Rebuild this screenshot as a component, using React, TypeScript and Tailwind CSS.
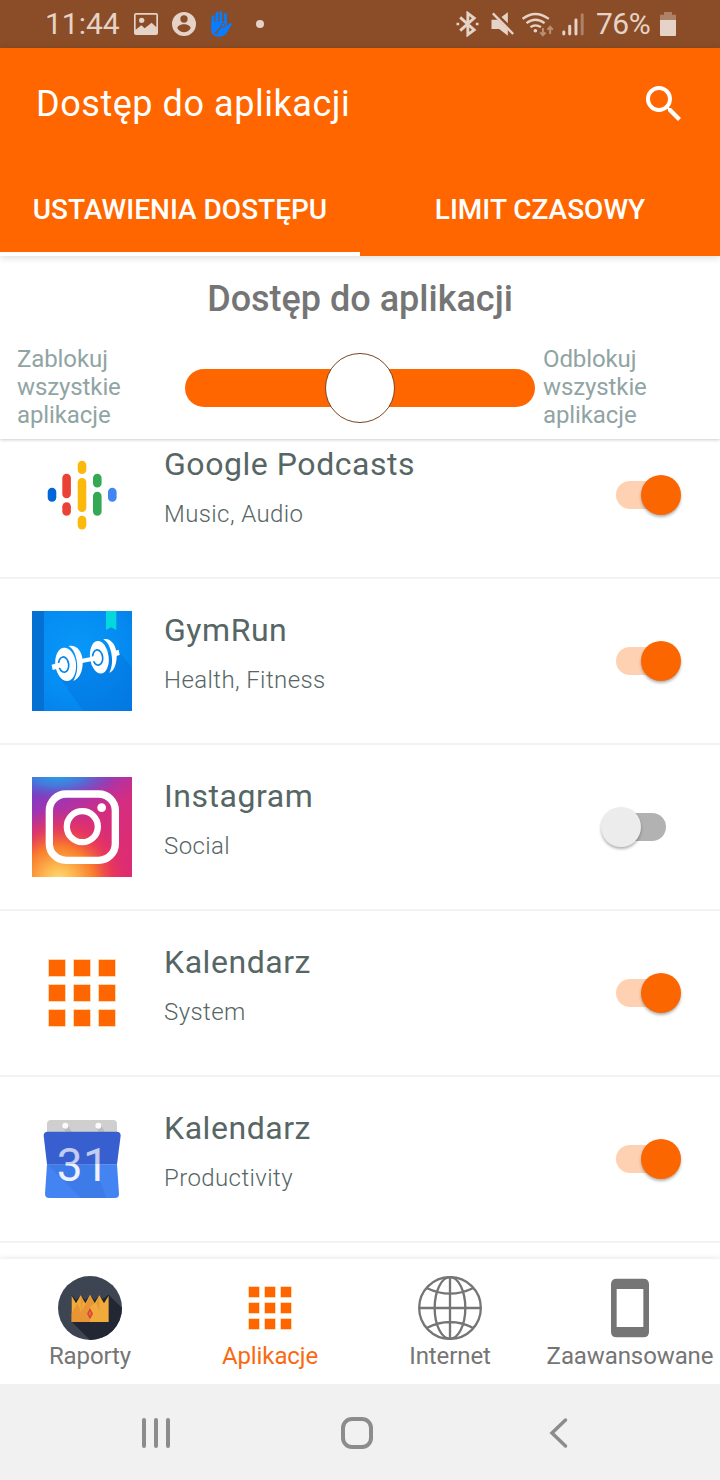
import { useState } from 'react';
import type { ReactNode } from 'react';
import { MdSearch } from 'react-icons/md';

interface AppEntry {
  id: string;
  name: string;
  category: string;
  icon: ReactNode;
  allowed: boolean;
}

function PodcastsIcon() {
  return (
    <svg viewBox="0 0 100 100" className="size-[100px]">
      <rect x="15.7" y="42.7" width="8.6" height="14" rx="4.3" fill="#0066d9" />
      <rect x="30.3" y="28.7" width="8.6" height="24.5" rx="4.3" fill="#ea4335" />
      <rect x="30.3" y="57.2" width="8.6" height="13.6" rx="4.3" fill="#ea4335" />
      <rect x="45.7" y="15.7" width="8.6" height="13.3" rx="4.3" fill="#fbb90b" />
      <rect x="45.7" y="33" width="8.6" height="34" rx="4.3" fill="#fbb90b" />
      <rect x="45.7" y="70.8" width="8.6" height="13.6" rx="4.3" fill="#fbb90b" />
      <rect x="61" y="28.7" width="8.6" height="13.8" rx="4.3" fill="#34a853" />
      <rect x="61" y="46.8" width="8.6" height="24" rx="4.3" fill="#34a853" />
      <rect x="76" y="42.7" width="8.6" height="14" rx="4.3" fill="#4285f4" />
    </svg>
  );
}

function GymRunIcon() {
  return (
    <svg viewBox="96 33 300 300" className="size-[100px]">
      <defs>
        <radialGradient id="gym-bg" cx="0.45" cy="0.4" r="0.75">
          <stop offset="0" stopColor="#0798f8" />
          <stop offset="0.6" stopColor="#058cf2" />
          <stop offset="1" stopColor="#0480e8" />
        </radialGradient>
      </defs>
      <rect x="96" y="33" width="300" height="300" fill="url(#gym-bg)" />
      <path d="M168 218 250 333H396V202L352 150Z" fill="#0468d4" opacity="0.3" />
      <rect x="96" y="33" width="36" height="300" fill="#0470d2" />
      <path d="M318 33H349V90L333.500 82 318 90Z" fill="#05d8dc" />
      <path d="M155 194 172 189V206L158 210Z" fill="#fff" />
      <path d="M344 153 356 149 359 165 346 169Z" fill="#fff" />
      <path d="M242 177 278 170V183L242 190Z" fill="#fff" />
      <g transform="rotate(-7 197 193)">
        <ellipse cx="197" cy="193" rx="31" ry="50" fill="#fff" />
        <ellipse cx="191" cy="193" rx="15" ry="23" fill="#fff" stroke="#0684ea" strokeWidth="5" />
      </g>
      <rect x="164" y="188" width="32" height="15" rx="6" fill="#fff" transform="rotate(-12 180 195)" />
      <path d="M206 138C230 133 247 154 248 184C249 211 240 235 220 243C231 223 234 205 230 181C226 160 220 147 206 138Z" fill="#fff" />
      <g transform="rotate(-7 298 172)">
        <ellipse cx="298" cy="172" rx="28" ry="49" fill="#fff" />
        <ellipse cx="293" cy="172" rx="15" ry="23" fill="#fff" stroke="#0684ea" strokeWidth="5" />
      </g>
      <rect x="270" y="168" width="29" height="15" rx="5" fill="#fff" transform="rotate(-12 284 175)" />
      <path d="M310 118C331 112 349 135 350 163C351 188 344 212 328 219C337 198 338 184 334 160C330 140 324 127 310 118Z" fill="#fff" />
    </svg>
  );
}

function InstagramIcon() {
  return (
    <svg viewBox="96 36 300 300" className="size-[100px]">
      <defs>
        <linearGradient id="ig-base" x1="0.15" y1="0" x2="0.65" y2="0.85">
          <stop offset="0" stopColor="#6d3fca" />
          <stop offset="0.3" stopColor="#a634ae" />
          <stop offset="0.6" stopColor="#d42d80" />
          <stop offset="1" stopColor="#dc2c74" />
        </linearGradient>
        <radialGradient id="ig-warm" cx="0.27" cy="1.05" r="0.75">
          <stop offset="0" stopColor="#ffe080" />
          <stop offset="0.2" stopColor="#fdbb52" />
          <stop offset="0.48" stopColor="#f97b2c" />
          <stop offset="0.72" stopColor="#ee3e4e" stopOpacity="0.65" />
          <stop offset="1" stopColor="#dd2a73" stopOpacity="0" />
        </radialGradient>
        <radialGradient id="ig-cool" cx="0.15" cy="-0.04" r="1" gradientTransform="translate(0.15 0) scale(0.65 0.25)">
          <stop offset="0" stopColor="#2a9fe6" />
          <stop offset="0.4" stopColor="#3d83df" stopOpacity="0.85" />
          <stop offset="1" stopColor="#6a48c8" stopOpacity="0" />
        </radialGradient>
      </defs>
      <rect x="96" y="36" width="300" height="300" fill="url(#ig-base)" />
      <rect x="96" y="36" width="300" height="300" fill="url(#ig-warm)" />
      <rect x="96" y="36" width="300" height="300" fill="url(#ig-cool)" />
      <g fill="none" stroke="#fff">
        <rect x="148" y="87" width="198" height="199" rx="50" strokeWidth="22" />
        <circle cx="247" cy="185" r="46.500" strokeWidth="19" />
      </g>
      <circle cx="305" cy="128" r="13" fill="#fff" />
    </svg>
  );
}

function GridIcon() {
  return (
    <svg viewBox="0 0 100 100" className="size-[100px]" fill="#ff6600" stroke="#ffdcb4" strokeWidth="0.8">
      {[16.6, 41.6, 66.6].map((y) =>
        [16.6, 41.6, 66.6].map((x) => <rect key={`${x}-${y}`} x={x} y={y} width="16.8" height="16.8" />)
      )}
    </svg>
  );
}

function CalendarIcon() {
  return (
    <svg viewBox="96 27 300 300" className="size-[100px]">
      <defs>
        <linearGradient id="cal-digits" gradientUnits="userSpaceOnUse" x1="0" y1="143" x2="0" y2="243">
          <stop offset="0.5" stopColor="#c3cbee" />
          <stop offset="0.5" stopColor="#eff2fd" />
        </linearGradient>
      </defs>
      <path d="M141 100V72Q141 60 153 60H339Q351 60 351 72V100Z" fill="#cfcfcf" />
      <path d="M188 84 200 97H216L203 73ZM287 84 299 97H315L302 73Z" fill="#bcbcbc" />
      <circle cx="196" cy="77" r="9" fill="#fafafa" />
      <circle cx="295" cy="77" r="9" fill="#fafafa" />
      <path d="M141 193H351L357 281Q357 294 345 294H148Q135 294 135 281Z" fill="#4484f2" />
      <path d="M141 193H300V243L320 294H242Z" fill="#356fdc" opacity="0.4" />
      <path d="M143 95H350Q362 95 362 107L351 193H141L131 107Q131 95 143 95Z" fill="#375fd0" />
      <text
        x="249"
        y="243"
        textAnchor="middle"
        fontSize="138"
        letterSpacing="1"
        fill="url(#cal-digits)"
        className="font-[Roboto,sans-serif] font-normal"
      >
        31
      </text>
    </svg>
  );
}

function CrownIcon() {
  return (
    <svg viewBox="174 78 192 192" className="size-16">
      <defs>
        <clipPath id="crown-disc">
          <circle cx="270" cy="174" r="96" />
        </clipPath>
      </defs>
      <g clipPath="url(#crown-disc)">
        <rect x="174" y="78" width="192" height="192" fill="#3d4553" />
        <path d="M326 134 372 180V280H280L215 215Z" fill="#232733" />
        <path d="M215 134 228 150 242 138 256 150 270 138 284 150 298 138 312 150 326 134V180H215Z" fill="#222430" />
        <path d="M215 137 228 160 242 136 256 160 270 135 284 160 298 136 312 160 326 137V216H215Z" fill="#f0ab3c" />
        <path d="M242 136 249 152 243 185ZM270 135V216H215V190L232 160 243 185 258 160Z" fill="#e99536" />
        <path d="M298 136V183L289 160ZM270 135 284 160 270 172Z" fill="#e39a35" />
        <path d="M270 174 279 191 270 208 261 191Z" fill="#d9452f" />
        <path d="M270 183 274 191 270 199 266 191Z" fill="#ef6a55" />
      </g>
    </svg>
  );
}

function NavGridIcon() {
  return (
    <svg viewBox="714 78 192 192" className="size-16" fill="#ff6600" stroke="#ffdcb4" strokeWidth="2">
      {[110, 158, 206].map((y) =>
        [746, 794, 842].map((x) => <rect key={`${x}-${y}`} x={x} y={y} width="32" height="32" />)
      )}
    </svg>
  );
}

function GlobeIcon() {
  return (
    <svg viewBox="174 78 192 192" className="size-16" fill="none" stroke="#757575" strokeWidth="7">
      <circle cx="270" cy="174" r="92.500" />
      <ellipse cx="270" cy="174" rx="46" ry="92.500" />
      <path d="M270 81V267M177 174H363M200 114Q270 148 340 114M200 234Q270 198 340 234" />
    </svg>
  );
}

function PhoneIcon() {
  return (
    <svg viewBox="714 78 192 192" className="size-16" fill="#757575">
      <path
        fillRule="evenodd"
        d="M770 86H850Q867 86 867 103V245Q867 262 850 262H770Q753 262 753 245V103Q753 86 770 86ZM770 117V231H850V117Z"
      />
    </svg>
  );
}

function StatusBar() {
  return (
    <div className="flex h-12 items-center bg-[#8b4d27] pl-[45px] pr-[44px] text-[30px] leading-none text-[#e5d3c8]">
      <span className="w-[75px]">11:44</span>
      <svg viewBox="402 36 72 66" className="ml-[14px] h-[22px] w-6" fill="currentColor">
        <path
          fillRule="evenodd"
          d="M408 36H468Q474 36 474 42V96Q474 102 468 102H408Q402 102 402 96V42Q402 36 408 36ZM407 41V86L424 73 434 82 455 65 469 79V41Z"
        />
        <circle cx="425" cy="58" r="8" />
      </svg>
      <svg viewBox="516 33 72 72" className="ml-[14px] size-6" fill="currentColor">
        <path
          fillRule="evenodd"
          d="M552 33A36 36 0 1 1 552 105A36 36 0 1 1 552 33ZM552 43A11 11 0 1 0 552 65A11 11 0 1 0 552 43ZM552 70C541 70 532 75 532 82C537 90 544 94 552 94S567 90 572 82C572 75 563 70 552 70Z"
        />
      </svg>
      <svg viewBox="633 30 64 78" className="ml-[15px] h-[26px] w-[21px]">
        <path
          d="M639 47V86M651 36V70M663 34V70M677 40V74"
          fill="none"
          stroke="#0a7cf5"
          strokeWidth="9"
          strokeLinecap="round"
        />
        <path d="M634 62H681V78L688 68Q694 64 697 69L681 96Q674 108 656 108Q634 106 634 87Z" fill="#0a7cff" />
        <path d="M645 99 664 78M650 95 654 99" stroke="#8b4d27" strokeWidth="4" fill="none" />
        <circle cx="670" cy="73" r="6" fill="none" stroke="#8b4d27" strokeWidth="3" />
      </svg>
      <span className="ml-6 size-2 rounded-full bg-[#e5d3c8]" />

      <svg viewBox="288 30 68 78" className="ml-auto h-[26px] w-[23px]" fill="none" stroke="currentColor" strokeWidth="8.500">
        <path d="M300 49 342 87 323 101V37L342 51 300 89" />
        <path d="M289 69H297M347 69H355" strokeWidth="8" />
      </svg>
      <svg viewBox="392 33 68 72" className="ml-3 h-6 w-[23px]" fill="currentColor">
        <path d="M393 56H412L442 86V104L416 84H393ZM423 48 442 34V67Z" />
        <path d="M397 37 458 99" stroke="currentColor" strokeWidth="7" />
      </svg>
      <svg viewBox="486 30 96 76" className="ml-2 h-[25px] w-8" fill="none" stroke="currentColor" strokeWidth="7">
        <path d="M487 51Q526 21 567 51M499 64Q526 43 554 64M511 76Q526 65 543 76" />
        <circle cx="526" cy="87" r="5.500" fill="currentColor" stroke="none" />
        <g stroke="#b98f76" strokeWidth="6">
          <path d="M549 79V100M541 92 549 101 557 92M571 97V76M563 84 571 75 579 84" />
        </g>
      </svg>
      <svg viewBox="606 36 66 70" className="ml-2 h-[23px] w-[22px]" fill="none" stroke="currentColor" strokeWidth="9" strokeLinecap="round">
        <path d="M611 94V100M629 76V100M648 57V100" />
        <path d="M667 41V100" stroke="#ae8268" />
      </svg>
      <span className="ml-[12px] w-[56px] tracking-[-0.5px]">76%</span>
      <svg viewBox="900 33 48 72" className="ml-2 h-6 w-4">
        <path d="M912 33H936V41H948V58H900V41H912Z" fill="#ae8268" />
        <path d="M900 57H948V102Q948 105 945 105H903Q900 105 900 102Z" fill="#e5d3c8" />
      </svg>
    </div>
  );
}

interface ToggleProps {
  checked: boolean;
  label: string;
  onChange: () => void;
}

function Toggle({ checked, label, onChange }: ToggleProps) {
  return (
    <button
      role="switch"
      aria-checked={checked}
      aria-label={label}
      onClick={onChange}
      className="relative flex h-10 w-20 items-center justify-center"
    >
      <span className={`h-7 w-[50px] rounded-full ${checked ? 'bg-[#ffd1b3]' : 'bg-[#b2b2b2]'}`} />
      <span
        className={`absolute top-0 size-10 rounded-full shadow-[0_2px_3px_rgba(0,0,0,0.3)] ${
          checked ? 'right-0 bg-[#fc6600]' : 'left-0 bg-[#ececec]'
        }`}
      />
    </button>
  );
}

const initialApps: AppEntry[] = [
  { id: 'podcasts', name: 'Google Podcasts', category: 'Music, Audio', icon: <PodcastsIcon />, allowed: true },
  { id: 'gymrun', name: 'GymRun', category: 'Health, Fitness', icon: <GymRunIcon />, allowed: true },
  { id: 'instagram', name: 'Instagram', category: 'Social', icon: <InstagramIcon />, allowed: false },
  { id: 'calendar-system', name: 'Kalendarz', category: 'System', icon: <GridIcon />, allowed: true },
  { id: 'calendar', name: 'Kalendarz', category: 'Productivity', icon: <CalendarIcon />, allowed: true },
];

const navItems = [
  { label: 'Raporty', icon: <CrownIcon /> },
  { label: 'Aplikacje', icon: <NavGridIcon /> },
  { label: 'Internet', icon: <GlobeIcon /> },
  { label: 'Zaawansowane', icon: <PhoneIcon /> },
];

const tabs = ['USTAWIENIA DOSTĘPU', 'LIMIT CZASOWY'];

export default function App() {
  const [apps, setApps] = useState(initialApps);
  const [activeTab, setActiveTab] = useState(0);
  const [activeNav, setActiveNav] = useState('Aplikacje');

  const toggleApp = (id: string) => {
    setApps(apps.map((app) => (app.id === id ? { ...app, allowed: !app.allowed } : app)));
  };

  return (
    <div className="flex h-[1480px] w-[720px] flex-col overflow-hidden bg-white font-[Roboto,sans-serif]">
      <StatusBar />

      <header className="z-10 bg-[#ff6600] text-white shadow-[0_1px_8px_rgba(0,0,0,0.16)]">
        <div className="flex h-28 items-center justify-between pl-[36px] pr-8 pb-px">
          <h1 className="text-[36px] leading-none tracking-[0.55px]">Dostęp do aplikacji</h1>
          <button aria-label="Szukaj">
            <MdSearch size={48} />
          </button>
        </div>
        <div className="grid h-24 grid-cols-2">
          {tabs.map((tab, index) => (
            <button
              key={tab}
              onClick={() => setActiveTab(index)}
              className={`border-b-4 pt-2 text-[28px] font-medium ${
                activeTab === index ? 'border-white' : 'border-transparent'
              }`}
            >
              {tab}
            </button>
          ))}
        </div>
      </header>

      {/* Blokowanie / odblokowanie wszystkich */}
      <section className="z-[5] h-[183px] shrink-0 bg-white shadow-[0_1px_3px_rgba(0,0,0,0.2)]">
        <h2 className="pt-[21px] text-center text-[36px] leading-[44px] font-medium text-[#757575]">
          Dostęp do aplikacji
        </h2>
        <div className="mt-6 flex h-[84px] items-center pl-[17px] text-2xl leading-7 tracking-[-0.1px] text-[#90a4a4]">
          <span className="w-[168px] pr-10">Zablokuj wszystkie aplikacje</span>
          <div className="mt-0.5 flex h-[38px] w-[350px] items-center justify-center rounded-full bg-[#ff6600]">
            <span className="size-[70px] rounded-full border border-[#7a4420] bg-white" />
          </div>
          <span className="ml-2 w-[120px]">Odblokuj wszystkie aplikacje</span>
        </div>
      </section>

      <main className="h-[820px] shrink-0 overflow-hidden">
        <ul className="-mt-[26px]">
          {apps.map((app) => (
            <li key={app.id} className="flex h-[166px] items-start border-b-2 border-[#f0f3f3] px-8 pt-8">
              {app.icon}
              <div className="ml-8 flex-1">
                <div className="text-[32px] leading-[38px] tracking-[0.55px] text-[#566665]">{app.name}</div>
                <div className="mt-[16px] text-2xl leading-[30px] font-light tracking-[0.4px] text-[#566665]">
                  {app.category}
                </div>
              </div>
              <div className="mr-[7px] pt-[30px]">
                <Toggle checked={app.allowed} label={app.name} onChange={() => toggleApp(app.id)} />
              </div>
            </li>
          ))}
        </ul>
      </main>

      <nav className="z-10 grid h-[125px] shrink-0 grid-cols-4 bg-white shadow-[0_-1px_6px_rgba(0,0,0,0.09)]">
        {navItems.map((item) => (
          <button
            key={item.label}
            onClick={() => setActiveNav(item.label)}
            className={`flex flex-col items-center pt-[17px] text-2xl leading-8 tracking-[-0.1px] ${
              activeNav === item.label ? 'text-[#f96a10]' : 'text-[#757575]'
            }`}
          >
            {item.icon}
            <span>{item.label}</span>
          </button>
        ))}
      </nav>

      <div className="z-10 flex h-24 shrink-0 items-center bg-[#f1f1f1] pt-0.5 pl-[140px]">
        <svg viewBox="0 0 32 32" className="size-8" fill="none" stroke="#8c8c8c" strokeWidth="4" strokeLinecap="round">
          <path d="M4 3V29M16 3V29M28 3V29" />
        </svg>
        <svg viewBox="0 0 32 32" className="ml-[169px] size-8" fill="none" stroke="#8c8c8c" strokeWidth="4">
          <rect x="2" y="2" width="28" height="28" rx="9" />
        </svg>
        <svg viewBox="0 0 32 32" className="ml-[170px] size-8" fill="none" stroke="#8c8c8c" strokeWidth="3.500" strokeLinecap="round">
          <path d="M22.500 3 9 16 22.500 29" />
        </svg>
      </div>
    </div>
  );
}
